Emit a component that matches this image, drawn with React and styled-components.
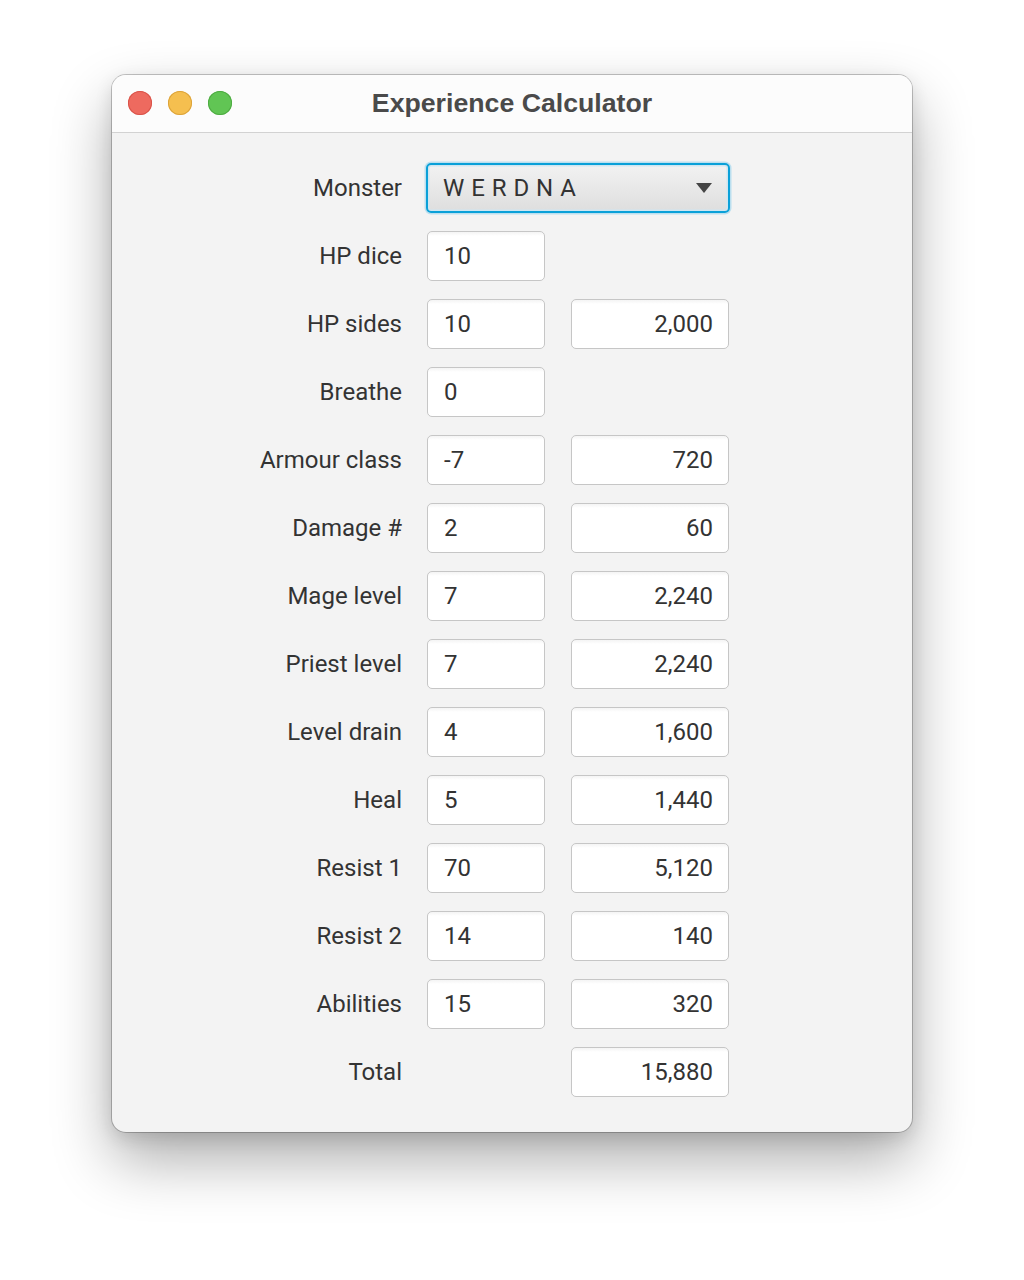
import React from "react";
import styled, { createGlobalStyle } from "styled-components";

const Global = createGlobalStyle`
  html, body { margin: 0; padding: 0; background: #ffffff; }
  body { font-family: Roboto, "Liberation Sans", sans-serif; }
`;

const Page = styled.div`
  width: 1024px;
  height: 1280px;
  display: flex;
  justify-content: center;
  padding-top: 75px;
  box-sizing: border-box;
`;

const Window = styled.div`
  width: 800px;
  height: 1057px;
  border-radius: 14px;
  background: #f3f3f3;
  box-shadow: 0 0 0 1px rgba(0,0,0,0.22), 0 28px 60px rgba(0,0,0,0.32), 0 6px 18px rgba(0,0,0,0.12);
  overflow: hidden;
  display: flex;
  flex-direction: column;
`;

const TitleBar = styled.div`
  height: 57px;
  flex: none;
  background: #fcfcfc;
  border-bottom: 1px solid #d2d2d2;
  position: relative;
  display: flex;
  align-items: center;
  justify-content: center;
`;

const Lights = styled.div`
  position: absolute;
  left: 16px;
  top: 16px;
  display: flex;
  gap: 16px;
`;

const Light = styled.span`
  width: 24px;
  height: 24px;
  border-radius: 50%;
  background: ${p => p.$c};
  box-shadow: inset 0 0 0 1px ${p => p.$b};
`;

const Title = styled.div`
  font-family: "Liberation Sans", Arial, sans-serif;
  font-weight: 700;
  font-size: 26.7px;
  color: #4a4a4a;
`;

const Body = styled.div`
  flex: 1;
  display: grid;
  grid-template-columns: 289px 118px 158px;
  column-gap: 26px;
  row-gap: 18px;
  align-content: start;
  align-items: center;
  padding-top: 30px;
`;

const Label = styled.div`
  grid-column: 1;
  text-align: right;
  font-size: 24px;
  color: #333333;
  margin-right: -1px;
`;

const Field = styled.div`
  grid-column: ${p => p.$col};
  height: 50px;
  box-sizing: border-box;
  border: 1.5px solid #c6c6c6;
  border-radius: 5px;
  background: linear-gradient(#f4f4f4 0px, #ffffff 4px, #ffffff 100%);
  display: flex;
  align-items: center;
  justify-content: ${p => (p.$right ? "flex-end" : "flex-start")};
  padding: 0 15px 0 16px;
  font-size: 24px;
  color: #333333;
`;

const Combo = styled.div`
  grid-column: 2 / span 2;
  height: 50px;
  box-sizing: border-box;
  border: 2.5px solid #0aa0d8;
  border-radius: 5px;
  box-shadow: 0 0 0 1.5px rgba(120, 200, 235, 0.45), inset 0 0 0 1.5px #cfe6f1;
  background: linear-gradient(#f2f2f2, #dedede);
  display: flex;
  align-items: center;
  justify-content: space-between;
  padding: 0 15px 0 15px;
  margin-left: -1px;
  margin-right: -1px;
`;

const ComboText = styled.span`
  font-size: 24px;
  letter-spacing: 6.9px;
  color: #333333;
`;

const Arrow = styled.span`
  width: 0;
  height: 0;
  border-left: 8px solid transparent;
  border-right: 8px solid transparent;
  border-top: 10px solid #454545;
  margin-right: 1px;
`;

const rows = [
  ["HP dice", "10", null],
  ["HP sides", "10", "2,000"],
  ["Breathe", "0", null],
  ["Armour class", "-7", "720"],
  ["Damage #", "2", "60"],
  ["Mage level", "7", "2,240"],
  ["Priest level", "7", "2,240"],
  ["Level drain", "4", "1,600"],
  ["Heal", "5", "1,440"],
  ["Resist 1", "70", "5,120"],
  ["Resist 2", "14", "140"],
  ["Abilities", "15", "320"],
];

export default function App() {
  return (
    <>
      <Global />
      <Page>
        <Window>
          <TitleBar>
            <Lights>
              <Light $c="#ee6a5f" $b="#d9534a" />
              <Light $c="#f5bf4f" $b="#dca33a" />
              <Light $c="#61c554" $b="#4eab42" />
            </Lights>
            <Title>Experience Calculator</Title>
          </TitleBar>
          <Body>
            <Label>Monster</Label>
            <Combo>
              <ComboText>WERDNA</ComboText>
              <Arrow />
            </Combo>
            {rows.map(([label, a, b]) => (
              <React.Fragment key={label}>
                <Label>{label}</Label>
                <Field $col={2}>{a}</Field>
                {b !== null && (
                  <Field $col={3} $right>
                    {b}
                  </Field>
                )}
              </React.Fragment>
            ))}
            <Label>Total</Label>
            <Field $col={3} $right>
              15,880
            </Field>
          </Body>
        </Window>
      </Page>
    </>
  );
}
